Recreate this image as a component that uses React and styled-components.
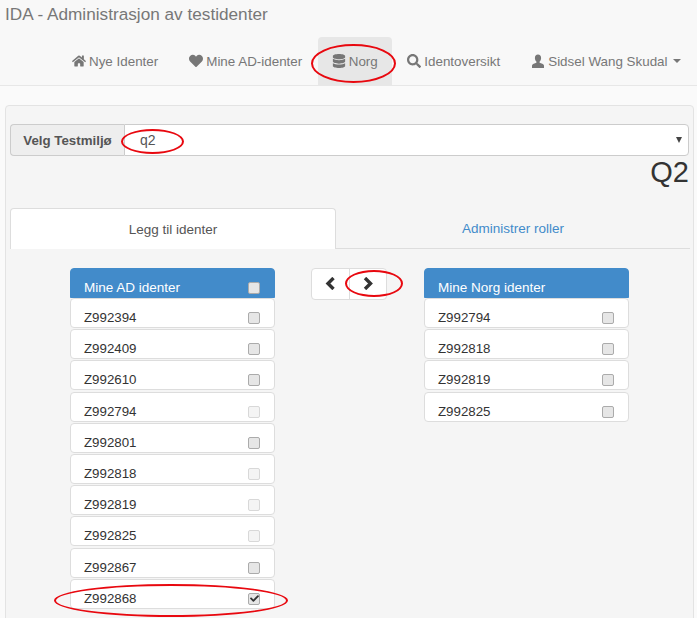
import React from 'react'
import styled, { createGlobalStyle } from 'styled-components'
import { FaHome, FaHeart, FaDatabase, FaSearch, FaCheck } from 'react-icons/fa'

const GlobalStyle = createGlobalStyle`
  html, body {
    margin: 0;
    padding: 0;
    background: #fff;
  }
  * {
    box-sizing: border-box;
  }
`

const Page = styled.div`
  position: relative;
  width: 697px;
  height: 618px;
  overflow: hidden;
  background: #fafafa;
  color: #333;
  font-family: 'Liberation Sans', Arial, sans-serif;
  font-size: 14px;
`

const Navbar = styled.header`
  height: 86px;
  background: #f8f8f8;
  border-bottom: 1px solid #e7e7e7;
`

const Brand = styled.div`
  padding: 5px 0 0 5px;
  height: 37px;
  font-size: 17.2px;
  line-height: 18px;
  color: #777;
`

const Nav = styled.nav`
  display: flex;
  padding-left: 56.5px;
`

const NavItem = styled.a`
  display: flex;
  align-items: center;
  gap: 3px;
  height: 48px;
  padding: 0 ${(p) => (p.$active ? 14 : 15.5)}px;
  color: #777;
  font-size: 13.4px;
  white-space: nowrap;
  background: ${(p) => (p.$active ? '#e7e7e7' : 'transparent')};
  border-radius: 4px 4px 0 0;

  svg {
    width: 14px;
    height: 14px;
    flex: none;
  }
`

const Caret = styled.span`
  width: 0;
  height: 0;
  margin-left: 2px;
  border-top: 4px solid #777;
  border-left: 4px solid transparent;
  border-right: 4px solid transparent;
`

const Well = styled.main`
  margin: 19px 3px 0 5px;
  height: 520px;
  padding: 18px 4px 0;
  background: #f5f5f5;
  border: 1px solid #e3e3e3;
  border-radius: 4px;
`

const InputGroup = styled.div`
  display: flex;
  height: 32px;
`

const Addon = styled.label`
  display: flex;
  align-items: center;
  justify-content: center;
  width: 114px;
  background: #eee;
  border: 1px solid #ccc;
  border-right: 0;
  border-radius: 4px 0 0 4px;
  font-weight: bold;
  font-size: 13.3px;
  color: #555;
`

const SelectBox = styled.div`
  flex: 1;
  display: flex;
  align-items: center;
  justify-content: space-between;
  padding: 0 6px 0 15px;
  background: #fff;
  border: 1px solid #ccc;
  border-radius: 0 4px 4px 0;
  color: #555;
`

const SelectArrow = styled.span`
  width: 0;
  height: 0;
  border-top: 6px solid #444;
  border-left: 3px solid transparent;
  border-right: 3px solid transparent;
`

const EnvTitle = styled.h3`
  margin: 0;
  height: 52px;
  text-align: right;
  font-size: 29px;
  line-height: 33px;
  font-weight: 400;
  color: #333;
`

const Tabs = styled.div`
  display: flex;
  height: 41px;
  margin-right: -1px;
  border-bottom: 1px solid #ddd;
`

const Tab = styled.a`
  width: 326px;
  height: 41px;
  display: flex;
  align-items: center;
  justify-content: center;
  color: ${(p) => (p.$active ? '#555' : '#428bca')};
  font-size: 13.5px;
  ${(p) =>
    p.$active
      ? `background: #fff;
  border: 1px solid #ddd;
  border-bottom: 0;
  border-radius: 4px 4px 0 0;`
      : 'flex: 1;'}
`

const Columns = styled.div`
  display: flex;
  align-items: flex-start;
  padding: 19px 0 0 60px;
`

const ListColumn = styled.section`
  width: 205px;
  flex: none;
`

const ListHead = styled.div`
  height: 30px;
  display: flex;
  align-items: flex-end;
  justify-content: space-between;
  padding: 0 14px 1px 13px;
  background: #428bca;
  border: 1px solid #428bca;
  border-radius: 4px 4px 0 0;
  color: #fff;
  font-size: 13.5px;
  line-height: 16px;
`

const Row = styled.div`
  height: 30px;
  margin-bottom: 1.2px;
  display: flex;
  align-items: flex-end;
  justify-content: space-between;
  padding: 0 14px 1px 13px;
  background: #fff;
  border: 1px solid #ddd;
  border-radius: 4px;
  font-size: 13.3px;
  line-height: 16px;
`

const CheckBox = styled.span`
  width: 12px;
  height: 12px;
  margin-bottom: 2px;
  display: flex;
  align-items: center;
  justify-content: center;
  background: ${(p) => (p.$disabled ? '#f4f4f4' : '#e6e6e6')};
  border: 1px solid ${(p) => (p.$disabled ? '#d8d8d8' : '#ababab')};
  border-radius: 2px;
  color: #333;
  font-size: 9px;
`

const ButtonGroup = styled.div`
  display: flex;
  flex: none;
  width: 76px;
  height: 32px;
  margin: 0 37px 0 36px;
  background: #fff;
  border: 1px solid #ddd;
  border-radius: 4px;
`

const ArrowButton = styled.button`
  flex: 1;
  display: flex;
  align-items: center;
  justify-content: center;
  padding: 0 0 2px;
  background: none;
  border: 0;
  color: #333;

  & + & {
    border-left: 1px solid #ddd;
  }
`

// red hand drawn marks lying on top of the screenshot
const Mark = styled.span`
  position: absolute;
  left: ${(p) => p.$x}px;
  top: ${(p) => p.$y}px;
  width: ${(p) => p.$w}px;
  height: ${(p) => p.$h}px;
  border: 2px solid #e8080f;
  border-radius: 50%;
  pointer-events: none;
`

const UserIcon = () => (
  <svg viewBox="0 0 14 14" fill="currentColor">
    <path d="M7 0.5c2 0 3.1 1.4 3.1 3.4 0 1.5-.6 2.9-1.5 3.6v1.2c1.6.6 4.2 1.2 4.4 2.8V14H1v-2.5c.2-1.6 2.8-2.2 4.4-2.8V7.500C4.500 6.800 3.900 5.400 3.900 3.900 3.900 1.900 5 .5 7 .5z" />
  </svg>
)

const Chevron = ({ left }) => (
  <svg width="11" height="13" viewBox="0 0 11 13" fill="none" stroke="currentColor" strokeWidth="3.4">
    <polyline points={left ? '8.500,1 3,6.500 8.500,12' : '3,1 8.500,6.500 3,12'} />
  </svg>
)

const adList = [
  { id: 'Z992394' },
  { id: 'Z992409' },
  { id: 'Z992610' },
  { id: 'Z992794', disabled: true },
  { id: 'Z992801' },
  { id: 'Z992818', disabled: true },
  { id: 'Z992819', disabled: true },
  { id: 'Z992825', disabled: true },
  { id: 'Z992867' },
  { id: 'Z992868', checked: true },
]

const norgList = ['Z992794', 'Z992818', 'Z992819', 'Z992825']

const IdentRow = ({ id, disabled, checked }) => (
  <Row>
    <span>{id}</span>
    <CheckBox $disabled={disabled}>{checked && <FaCheck />}</CheckBox>
  </Row>
)

const App = () => {
  return (
    <Page>
      <GlobalStyle />
      <Navbar>
        <Brand>IDA - Administrasjon av testidenter</Brand>
        <Nav>
          <NavItem><FaHome />Nye Identer</NavItem>
          <NavItem><FaHeart />Mine AD-identer</NavItem>
          <NavItem $active><FaDatabase />Norg</NavItem>
          <NavItem><FaSearch />Identoversikt</NavItem>
          <NavItem><UserIcon />Sidsel Wang Skudal<Caret /></NavItem>
        </Nav>
      </Navbar>
      <Well>
        <InputGroup>
          <Addon>Velg Testmiljø</Addon>
          <SelectBox>
            q2
            <SelectArrow />
          </SelectBox>
        </InputGroup>
        <EnvTitle>Q2</EnvTitle>
        <Tabs>
          <Tab $active>Legg til identer</Tab>
          <Tab>Administrer roller</Tab>
        </Tabs>
        <Columns>
          <ListColumn>
            <ListHead>
              Mine AD identer
              <CheckBox />
            </ListHead>
            {adList.map((item) => (
              <IdentRow key={item.id} {...item} />
            ))}
          </ListColumn>
          <ButtonGroup>
            <ArrowButton><Chevron left /></ArrowButton>
            <ArrowButton><Chevron /></ArrowButton>
          </ButtonGroup>
          <ListColumn>
            <ListHead>Mine Norg identer</ListHead>
            {norgList.map((id) => (
              <IdentRow key={id} id={id} />
            ))}
          </ListColumn>
        </Columns>
      </Well>
      <Mark $x={311} $y={44} $w={85} $h={39} />
      <Mark $x={121} $y={129} $w={63} $h={25} />
      <Mark $x={345} $y={270} $w={58} $h={27} />
      <Mark $x={54} $y={584} $w={234} $h={33} />
    </Page>
  )
}

export default App
